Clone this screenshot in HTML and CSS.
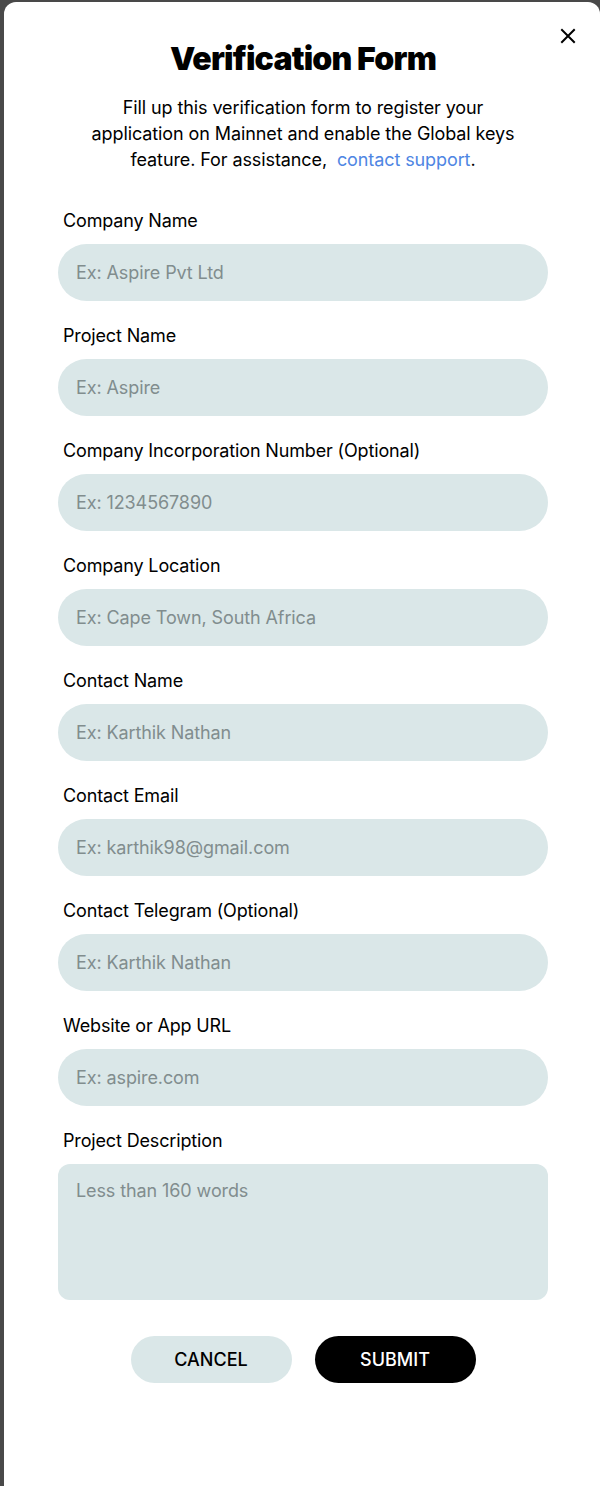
FILE: index.html
```html
<!DOCTYPE html>
<html>
<head>
<meta charset="utf-8">
<link rel="stylesheet" href="styles.css">
</head>
<body>
<div class="modal">
  <button class="close" aria-label="Close">
    <svg width="16" height="16" viewBox="0 0 16 16"><path d="M2 2 L14 14 M14 2 L2 14" stroke="#000" stroke-width="2" stroke-linecap="square"/></svg>
  </button>
  <h1 class="title">Verification Form</h1>
  <p class="intro">Fill up this verification form to register your application on Mainnet and enable the Global keys feature. For assistance, <a href="#" class="link">contact support</a>.</p>
  <form class="form">
    <div class="field"><label class="label">Company Name</label><div class="input">Ex: Aspire Pvt Ltd</div></div>
    <div class="field"><label class="label">Project Name</label><div class="input">Ex: Aspire</div></div>
    <div class="field"><label class="label">Company Incorporation Number (Optional)</label><div class="input">Ex: 1234567890</div></div>
    <div class="field"><label class="label">Company Location</label><div class="input">Ex: Cape Town, South Africa</div></div>
    <div class="field"><label class="label">Contact Name</label><div class="input">Ex: Karthik Nathan</div></div>
    <div class="field"><label class="label">Contact Email</label><div class="input">Ex: karthik98@gmail.com</div></div>
    <div class="field"><label class="label">Contact Telegram (Optional)</label><div class="input">Ex: Karthik Nathan</div></div>
    <div class="field"><label class="label">Website or App URL</label><div class="input">Ex: aspire.com</div></div>
    <div class="field"><label class="label">Project Description</label><div class="textarea">Less than 160 words</div></div>
    <div class="actions">
      <button type="button" class="btn btn-cancel">CANCEL</button>
      <button type="button" class="btn btn-submit">SUBMIT</button>
    </div>
  </form>
</div>
</body>
</html>
```

FILE: styles.css
```css
* { box-sizing: border-box; }
html, body { margin: 0; padding: 0; }
body {
  background: #494949;
  font-family: Inter, "Noto Sans", sans-serif;
  color: #000;
  height: 1486px;
  overflow: hidden;
}
.modal {
  position: relative;
  margin: 2px 0 0 4px;
  width: 596px;
  height: 1484px;
  background: #fff;
  border-radius: 12px 12px 0 0;
  padding: 37px 52px 0 54px;
}
.close {
  position: absolute;
  top: 26px;
  right: 24px;
  background: none;
  border: 0;
  padding: 0;
  width: 16px;
  height: 16px;
}
.close svg { display: block; }
.title {
  margin: 0;
  text-align: center;
  font-size: 32px;
  line-height: 40px;
  font-weight: 900;
  letter-spacing: -0.8px;
}
.intro {
  margin: 16px auto 0;
  width: 430px;
  text-align: center;
  font-size: 18px;
  line-height: 26px;
  font-weight: 400;
  letter-spacing: -0.1px;
}
.link { color: #4f86e3; text-decoration: none; margin-left: 5px; }
.form {
  margin-top: 35px;
  display: flex;
  flex-direction: column;
  gap: 22px;
}
.field { display: flex; flex-direction: column; gap: 11px; }
.label {
  font-size: 18px;
  line-height: 25px;
  padding-left: 5px;
  letter-spacing: -0.15px;
}
.input, .textarea {
  background: #dae7e8;
  color: #818d8e;
  font-size: 18px;
  padding: 0 18px;
  letter-spacing: -0.1px;
}
.input {
  height: 57px;
  border-radius: 29px;
  display: flex;
  align-items: center;
}
.textarea {
  height: 136px;
  border-radius: 12px;
  padding-top: 15px;
  line-height: 24px;
}
.actions {
  margin-top: 14px;
  display: flex;
  justify-content: center;
  gap: 23px;
}
.btn {
  width: 161px;
  height: 47px;
  border: 0;
  border-radius: 24px;
  font-family: Inter, "Noto Sans", sans-serif;
  font-size: 18px;
  font-weight: 500;
}
.btn-cancel { background: #dae7e8; color: #000; }
.btn-submit { background: #000; color: #fff; }
```
